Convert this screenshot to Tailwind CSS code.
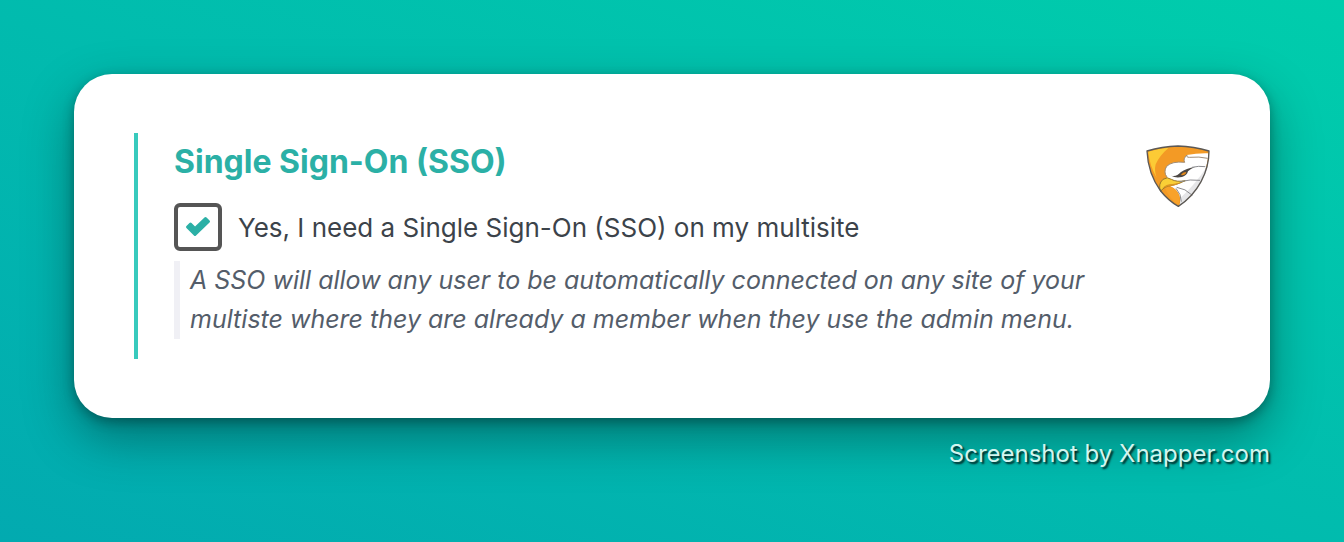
<!DOCTYPE html>
<html lang="en">
<head>
    <meta charset="UTF-8">
    <meta name="viewport" content="width=device-width, initial-scale=1.0">
    <title>Single Sign-On (SSO)</title>
    <script src="https://cdn.jsdelivr.net/npm/@tailwindcss/browser@4"></script>
</head>
<body class="min-h-screen bg-linear-to-tr/srgb from-[#02aab0] to-[#00cdac] px-[74px] pt-[74px] font-['Inter',sans-serif]">
    <!-- Option card -->
    <main class="bg-white rounded-[38px] px-15 py-[59px] shadow-[0_4px_12px_rgba(0,0,0,0.3),0_20px_50px_rgba(0,0,0,0.35)]">
        <section class="flex items-start justify-between border-l-4 border-[#38cabd] pl-9 pt-2 pb-5">
            <div class="max-w-[940px]">
                <h2 class="text-[32px] leading-[42px] font-bold text-[#2bb0a6]">Single Sign-On (SSO)</h2>

                <div class="mt-5 flex items-center gap-4">
                    <div class="relative size-12 shrink-0">
                        <input id="sso" type="checkbox" checked aria-describedby="sso-help" class="peer block size-12 appearance-none rounded-md border-4 border-[#555555] bg-white">
                        <svg class="pointer-events-none absolute inset-0 hidden size-12 peer-checked:block" fill="none" viewBox="0 0 48 48">
                            <path fill="#2bb0a6" stroke="#2bb0a6" stroke-width="3" stroke-linejoin="round" d="M13.500 24l3-3 4.500 4.500L31.500 15.500l3 3L21 31.500Z"></path>
                        </svg>
                    </div>
                    <label for="sso" class="text-[26px] leading-[39px] text-[#3c434a]">Yes, I need a Single Sign-On (SSO) on my multisite</label>
                </div>

                <p id="sso-help" class="mt-[10px] border-l-6 border-[#f0f0f5] pl-[10px] text-[25px] leading-[39px] italic text-[#545d6a]">A SSO will allow any user to be automatically connected on any site of your multiste where they are already a member when they use the admin menu.</p>
            </div>

            <!-- Eagle shield logo -->
            <svg class="mt-1 h-[63px] w-16 shrink-0" viewBox="32 31 192 187" fill="none" role="img" aria-label="Eagle shield">
                <path fill="#f39a25" d="M35 48Q80 34 128 33Q176 34 221 48C221 110 188 176 129 214Q100 198 76 168Q38 116 35 48Z"></path>
                <path fill="#fccb35" d="M39 50Q66 41 100 38Q72 62 61 88Q56 108 64 128Q42 90 39 50Z"></path>
                <path fill="#fff" d="M154 60Q186 54 219 55C217 110 186 176 133 211Q138 190 129 174Q116 154 94 150L96 128Q84 112 94 94Q110 78 149 82Q142 72 154 60Z"></path>
                <path fill="#e6e6e8" d="M217 92Q204 152 133 210Q136 198 134 190Q178 150 217 92Z"></path>
                <path fill="#f8a22a" d="M88 158Q108 152 122 165Q138 187 129 209Q106 195 88 158Z"></path>
                <path fill="#f9cf36" stroke="#98762c" stroke-width="3" stroke-linejoin="round" d="M76 169Q67 148 83 133Q96 124 108 133Q124 142 150 137Q132 146 112 151Q86 153 76 169Z"></path>
                <path fill="#d99422" d="M80 160Q92 147 112 147L138 143Q120 152 106 153Q88 155 80 160Z"></path>
                <path stroke="#a08d78" stroke-width="3" d="M95 126Q83 111 94 94Q110 78 148 82Q142 72 155 60Q152 67 162 67Q192 64 217 70"></path>
                <path fill="#4c4744" d="M108 122Q124 126 136 112Q152 100 180 95Q164 102 158 109Q155 122 140 126Q120 130 108 122Z"></path>
                <path fill="#e88a18" d="M138 118Q144 111 153 111Q151 121 138 121Z"></path>
                <path stroke="#8c8c90" stroke-width="3" d="M170 97Q190 92 210 95M134 140Q165 132 194 136M124 157Q150 160 171 181M122 160Q138 178 138 200"></path>
                <path stroke="#5b5855" stroke-width="4" stroke-linejoin="round" d="M35 48Q80 34 128 33Q176 34 221 48C221 110 188 176 129 214Q100 198 76 168Q38 116 35 48Z"></path>
            </svg>
        </section>
    </main>

    <!-- Attribution -->
    <footer class="mt-4 text-right text-[24px] leading-[39px] text-[#d2f5ef] [text-shadow:2px_2px_2px_rgba(0,0,0,0.8)]">Screenshot by Xnapper.com</footer>
</body>
</html>
